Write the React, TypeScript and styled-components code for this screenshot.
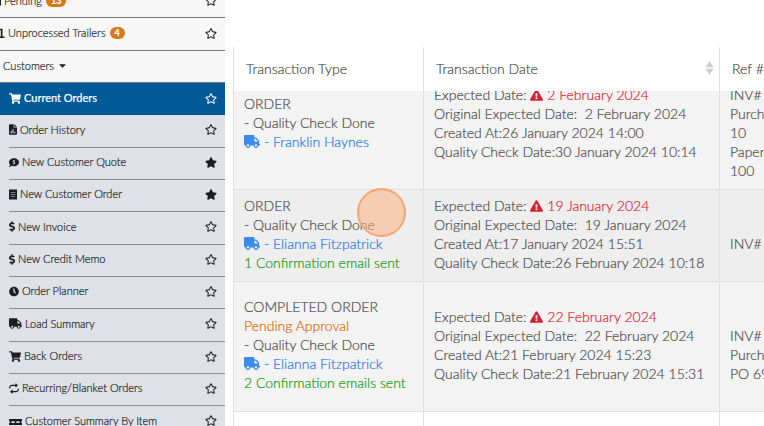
import React from "react";
import styled, { createGlobalStyle, css } from "styled-components";
import {
  FaShoppingCart, FaTruck, FaExclamationTriangle, FaDollarSign, FaClock,
  FaRegStar, FaStar, FaCaretDown,
} from "react-icons/fa";
import { FaRepeat } from "react-icons/fa6";

const GlobalStyle = createGlobalStyle`
  * { box-sizing: border-box; }
  html, body, #root { height: 100%; }
  body {
    margin: 0;
    background: #fff;
    overflow: hidden;
    font-family: Lato, "Liberation Sans", sans-serif;
    font-weight: 300;
  }
`;

const Page = styled.div`
  display: grid;
  grid-template-columns: 225px minmax(0, 1fr);
  column-gap: 8px;
  height: 100vh;
  overflow: hidden;
`;

const Sidebar = styled.nav`
  overflow: hidden;
  background: #dee1e7;
`;

const Menu = styled.ul`
  list-style: none;
  margin: -14px 0 0;
  padding: 0;
`;

type Tone = "top" | "active" | "sub";

const MenuItem = styled.li<{ $tone: Tone; $indent: number }>`
  display: flex;
  align-items: center;
  justify-content: space-between;
  height: 32px;
  padding: 0 8px 2px ${(p) => p.$indent}px;
  color: #1c1f22;
  &:nth-child(3n + 2) { height: 33px; }
  ${(p) => p.$tone === "top" && css`
    background: #f7f7f7;
    border-bottom: 1px solid #77797c;
  `}
  ${(p) => p.$tone === "active" && css`
    background: #035a96;
    color: #fff;
  `}
  ${(p) => p.$tone === "sub" && css`
    padding-bottom: 4px;
    background: linear-gradient(#8b8f94, #8b8f94) 9px 100% / 100% 1px no-repeat;
  `}
`;

const MenuLink = styled.a<{ $strong?: boolean }>`
  display: flex;
  align-items: center;
  gap: 3px;
  color: inherit;
  font-size: 11px;
  font-weight: ${(p) => (p.$strong ? 400 : 300)};
  line-height: 16px;
  white-space: nowrap;
  text-decoration: none;
  -webkit-text-stroke: 0.2px;
`;

const LeadIcon = styled.span<{ $width: number; $clipped: boolean }>`
  display: flex;
  margin-left: ${(p) => (p.$clipped ? -7 : 0)}px;
  svg { width: ${(p) => p.$width}px; height: 11px; }
`;

const Count = styled.span`
  margin-left: 1px;
  padding: 0 5px;
  border-radius: 7px;
  background: #d77a14;
  color: #fff;
  font-size: 9px;
  font-weight: 700;
  line-height: 12px;
`;

const StarButton = styled.button`
  display: flex;
  padding: 0;
  border: 0;
  background: none;
  color: inherit;
  svg { width: 12px; height: 11px; }
`;

const Main = styled.main`
  position: relative;
  padding-top: 47px;
  overflow: hidden;
`;

const Table = styled.table`
  display: block;
  color: #4c4c4c;
  font-size: 14px;
  line-height: 19px;
  -webkit-text-stroke: 0.2px;
`;

const columns = css`
  display: grid;
  grid-template-columns: 190px 296px minmax(120px, 1fr);
`;

const Head = styled.thead`
  display: block;
  position: relative;
  z-index: 1;
  background: #fff;
`;

const HeadRow = styled.tr`
  ${columns}
  height: 44px;
`;

const HeadCell = styled.th`
  display: flex;
  align-items: center;
  justify-content: space-between;
  padding: 0 5px 2px 12px;
  border-left: 1px solid #e0e1e6;
  font-weight: 300;
  white-space: nowrap;
`;

const Body = styled.tbody`
  display: block;
  margin-top: -31px;
`;

const Row = styled.tr<{ $shade: string; $height: number }>`
  ${columns}
  min-height: ${(p) => p.$height}px;
  background: ${(p) => p.$shade};
  border-bottom: 1px solid #dfe0e4;
`;

const Cell = styled.td`
  display: flex;
  flex-direction: column;
  justify-content: center;
  padding: 0 10px 4px;
  border-left: 1px solid #e0e1e6;
  white-space: pre;
`;

const Line = styled.div<{ $color?: string }>`
  min-height: 19px;
  color: ${(p) => p.$color ?? "inherit"};
`;

const Customer = styled.a`
  display: flex;
  align-items: center;
  gap: 4px;
  color: #1f7ae6;
  text-decoration: none;
  svg { width: 16px; height: 13px; color: #3b8beb; }
`;

const Late = styled.span`
  color: #d81f33;
  svg { width: 13px; height: 12px; margin: 0 4px 0 0; vertical-align: -1px; }
`;

const ClickMarker = styled.div`
  position: absolute;
  left: 124px;
  top: 188px;
  width: 49px;
  height: 49px;
  border: 2px solid #f9a56c;
  border-radius: 50%;
  background: rgba(250, 178, 130, 0.55);
`;

const FileChart = () => (
  <svg viewBox="0 0 384 512" fill="currentColor" aria-hidden="true">
    <path fillRule="evenodd" d="M48 0h176v136q0 24 24 24h136v304q0 48-48 48H48q-48 0-48-48V48Q0 0 48 0zM80 320v112h48V320zm88-80v192h48V240zm88 128v64h48v-64z" />
    <path d="M256 0v128h128z" />
  </svg>
);

const CommentDollar = () => (
  <svg viewBox="0 0 512 512" fill="currentColor" aria-hidden="true">
    <path d="M256 32C115 32 0 125 0 240c0 50 21 95 57 131-13 51-55 96-55 97-5 5 0 12 6 12 66 0 116-32 141-52 33 12 69 20 107 20 141 0 256-93 256-208S397 32 256 32z" />
    <path d="M310 180q-18-20-54-20c-66 0-64 66-4 78 64 14 66 82 2 82q-40 0-58-22M255 126v230" fill="none" stroke="#dee1e7" strokeWidth="36" />
  </svg>
);

const Receipt = () => (
  <svg viewBox="0 0 384 512" fill="currentColor" aria-hidden="true">
    <path fillRule="evenodd" d="M0 0l48 24L96 0l48 24L192 0l48 24L288 0l48 24L384 0v512l-48-24-48 24-48-24-48 24-48-24-48 24-48-24-48 24zM80 136v20h224v-20zm0 110v20h224v-20zm0 110v20h224v-20z" />
  </svg>
);

const Trailer = () => (
  <svg viewBox="0 0 512 512" fill="currentColor" aria-hidden="true">
    <path d="M0 40h420v350h92v72H0v-60h70V110H0zM170 110v280h60V110zm120 0v280h50V110z" fillRule="evenodd" />
  </svg>
);

const Pallet = () => (
  <svg viewBox="0 0 600 512" fill="currentColor" aria-hidden="true">
    <path fillRule="evenodd" d="M0 190h600v100H0zM30 290h80v80h150v-80h80v80h150v-80h80v80h30v100H0V370h30z" />
  </svg>
);

type Item = {
  label: string; icon?: React.ReactNode; width?: number; tone?: Tone; indent?: number;
  count?: number; starred?: boolean; caret?: boolean;
};

const items: Item[] = [
  { label: "Pending", icon: <Receipt />, width: 8, tone: "top", count: 13 },
  { label: "Unprocessed Trailers", icon: <Trailer />, width: 12, tone: "top", count: 4 },
  { label: "Customers", tone: "top", indent: 3, caret: true },
  { label: "Current Orders", icon: <FaShoppingCart />, width: 12, tone: "active" },
  { label: "Order History", icon: <FileChart />, width: 8 },
  { label: "New Customer Quote", icon: <CommentDollar />, width: 10, starred: true },
  { label: "New Customer Order", icon: <Receipt />, width: 8, starred: true },
  { label: "New Invoice", icon: <FaDollarSign />, width: 6 },
  { label: "New Credit Memo", icon: <FaDollarSign />, width: 6 },
  { label: "Order Planner", icon: <FaClock />, width: 10 },
  { label: "Load Summary", icon: <FaTruck />, width: 13 },
  { label: "Back Orders", icon: <FaShoppingCart />, width: 12 },
  { label: "Recurring/Blanket Orders", icon: <FaRepeat />, width: 10 },
  { label: "Customer Summary By Item", icon: <Pallet />, width: 13 },
];

type Order = {
  status: string; pending?: boolean; customer: string; emails?: string;
  expected: string; original: string; created: string; checked: string;
  refs: string[]; shade: string; height: number;
};

const orders: Order[] = [
  {
    status: "ORDER", customer: "Franklin Haynes",
    expected: "2 February 2024", original: "2 February 2024",
    created: "26 January 2024 14:00", checked: "30 January 2024 10:14",
    refs: ["", "INV#", "Purchase Order", "10", "Paperwork", "100"],
    shade: "#f3f3f3", height: 130,
  },
  {
    status: "ORDER", customer: "Elianna Fitzpatrick", emails: "1 Confirmation email sent",
    expected: "19 January 2024", original: "19 January 2024",
    created: "17 January 2024 15:51", checked: "26 February 2024 10:18",
    refs: ["", "INV#"], shade: "#eeeeee", height: 92,
  },
  {
    status: "COMPLETED ORDER", pending: true, customer: "Elianna Fitzpatrick",
    emails: "2 Confirmation emails sent",
    expected: "22 February 2024", original: "22 February 2024",
    created: "21 February 2024 15:23", checked: "21 February 2024 15:31",
    refs: ["", "INV#", "Purchase Order", "PO 6920"], shade: "#f3f3f3", height: 130,
  },
];

const SortIcon = () => (
  <svg width="9" height="16" viewBox="0 0 9 16" fill="#cfcfcf" aria-hidden="true">
    <path d="M4.500 1L8.500 7.200h-8zM.5 8.800h8L4.500 15z" />
  </svg>
);

export default function App() {
  return (
    <>
      <GlobalStyle />
      <Page>
        <Sidebar>
          <Menu>
            {items.map((item) => (
              <MenuItem key={item.label} $tone={item.tone ?? "sub"} $indent={item.indent ?? (item.tone === "top" ? 0 : 9)}>
                <MenuLink href="#" $strong={item.tone === "active"}>
                  {item.icon && (
                    <LeadIcon $width={item.width ?? 11} $clipped={item.tone === "top"}>{item.icon}</LeadIcon>
                  )}
                  {item.label}
                  {item.count && <Count>{item.count}</Count>}
                  {item.caret && <FaCaretDown />}
                </MenuLink>
                {!item.caret && (
                  <StarButton aria-label={`Favourite ${item.label}`}>
                    {item.starred ? <FaStar /> : <FaRegStar />}
                  </StarButton>
                )}
              </MenuItem>
            ))}
          </Menu>
        </Sidebar>
        <Main>
          <Table>
            <Head>
              <HeadRow>
                <HeadCell>Transaction Type</HeadCell>
                <HeadCell>Transaction Date<SortIcon /></HeadCell>
                <HeadCell>Ref #</HeadCell>
              </HeadRow>
            </Head>
            <Body>
              {orders.map((o) => (
                <Row key={o.checked} $shade={o.shade} $height={o.height}>
                  <Cell>
                    <Line>{o.status}</Line>
                    {o.pending && <Line $color="#d96a00">Pending Approval</Line>}
                    <Line>- Quality Check Done</Line>
                    <Customer href="#"><FaTruck />- {o.customer}</Customer>
                    {o.emails && <Line $color="#0f9a0f">{o.emails}</Line>}
                  </Cell>
                  <Cell>
                    <Line>Expected Date: <Late><FaExclamationTriangle />{o.expected}</Late></Line>
                    <Line>Original Expected Date:  {o.original}</Line>
                    <Line>Created At:{o.created}</Line>
                    <Line>Quality Check Date:{o.checked}</Line>
                  </Cell>
                  <Cell>
                    {o.refs.map((r, i) => <Line key={i}>{r}</Line>)}
                  </Cell>
                </Row>
              ))}
              <Row $shade="#ffffff" $height={92}><Cell /><Cell /><Cell /></Row>
            </Body>
          </Table>
          <ClickMarker />
        </Main>
      </Page>
    </>
  );
}
